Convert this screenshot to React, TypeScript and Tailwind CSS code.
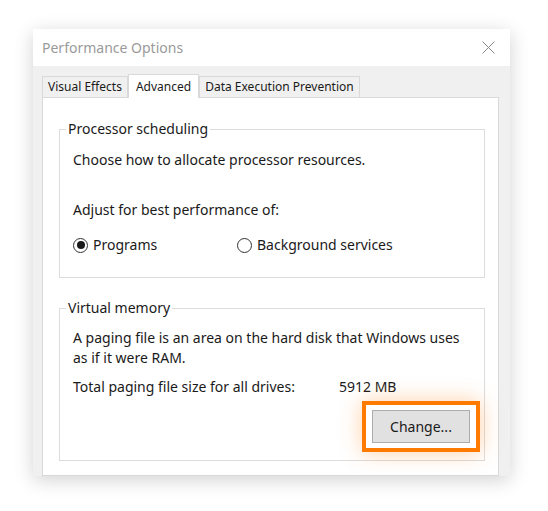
import React from "react";

const font = "font-['Segoe_UI','Noto_Sans','Open_Sans',sans-serif]";

const Radio = ({ checked, label }: { checked?: boolean; label: string }) => (
  <div className="flex items-center gap-[5px]">
    <span className="w-[15px] h-[15px] rounded-full border border-[#333] bg-white flex items-center justify-center">
      {checked && <span className="w-[8px] h-[8px] rounded-full bg-[#1a1a1a]" />}
    </span>
    <span>{label}</span>
  </div>
);

const Tab = ({ label, active }: { label: string; active?: boolean }) => (
  <div
    className={
      active
        ? "h-[24px] px-[7px] bg-white border border-b-0 border-[#d9d9d9] -mb-px relative z-10 flex items-center"
        : "h-[21px] px-[5px] bg-[#f0f0f0] border border-b-0 border-[#d9d9d9] flex items-center"
    }
  >
    {label}
  </div>
);

export default function App() {
  return (
    <div className={`w-[548px] h-[511px] bg-white overflow-hidden ${font} text-[#1a1a1a]`}>
      <div className="ml-[33px] mt-[29px] w-[477px] h-[447px] bg-[#f0f0f0] shadow-[0_4px_18px_rgba(0,0,0,0.18)] flex flex-col overflow-hidden">
        {/* title bar */}
        <div className="h-[37px] bg-white flex items-center justify-between pl-[9px] pr-[15px] shrink-0">
          <span className="text-[14px] text-[#9a9a9a]">Performance Options</span>
          <svg width="13" height="13" viewBox="0 0 13 13">
            <path d="M0.5 0.5L12.5 12.5M12.5 0.5L0.5 12.5" stroke="#8a8a8a" strokeWidth="1" />
          </svg>
        </div>

        {/* tabs */}
        <div className="flex items-end pl-[9px] pt-[8px] text-[12px] leading-none">
          <Tab label="Visual Effects" />
          <Tab label="Advanced" active />
          <Tab label="Data Execution Prevention" />
        </div>

        {/* panel */}
        <div className="ml-[9px] w-[457px] flex-1 bg-white border border-[#d9d9d9] pt-[21px] pl-[16px] pr-[13px] text-[14px] leading-[20px]">
          <fieldset className="border border-[#dcdcdc] px-[6px] pb-[21px] h-[159px]">
            <legend className="px-[2px]">Processor scheduling</legend>
            <div className="ml-[7px] flex flex-col">
              <div className="mt-[11px]">Choose how to allocate processor resources.</div>
              <div className="mt-[30px]">Adjust for best performance of:</div>
              <div className="mt-[15px] flex">
                <div className="w-[164px]">
                  <Radio checked label="Programs" />
                </div>
                <Radio label="Background services" />
              </div>
            </div>
          </fieldset>

          <fieldset className="mt-[20px] border border-[#dcdcdc] px-[6px] h-[163px]">
            <legend className="px-[2px]">Virtual memory</legend>
            <div className="ml-[7px] flex flex-col">
              <div className="mt-[10px]">
                A paging file is an area on the hard disk that Windows uses
                <br />
                as if it were RAM.
              </div>
              <div className="mt-[9px] flex">
                <span className="w-[266px]">Total paging file size for all drives:</span>
                <span>5912 MB</span>
              </div>
              <div className="mt-[4px] flex justify-end mr-[-2px]">
                <div className="border-[4px] border-[#ff7a00] bg-white px-[6px] py-[5px] shadow-[0_0_22px_rgba(255,122,0,0.35)]">
                  <button className="w-[98px] h-[33px] bg-[#e1e1e1] border border-[#adadad] text-[14px] text-[#1a1a1a]">
                    Change...
                  </button>
                </div>
              </div>
            </div>
          </fieldset>
        </div>
      </div>
    </div>
  );
}
